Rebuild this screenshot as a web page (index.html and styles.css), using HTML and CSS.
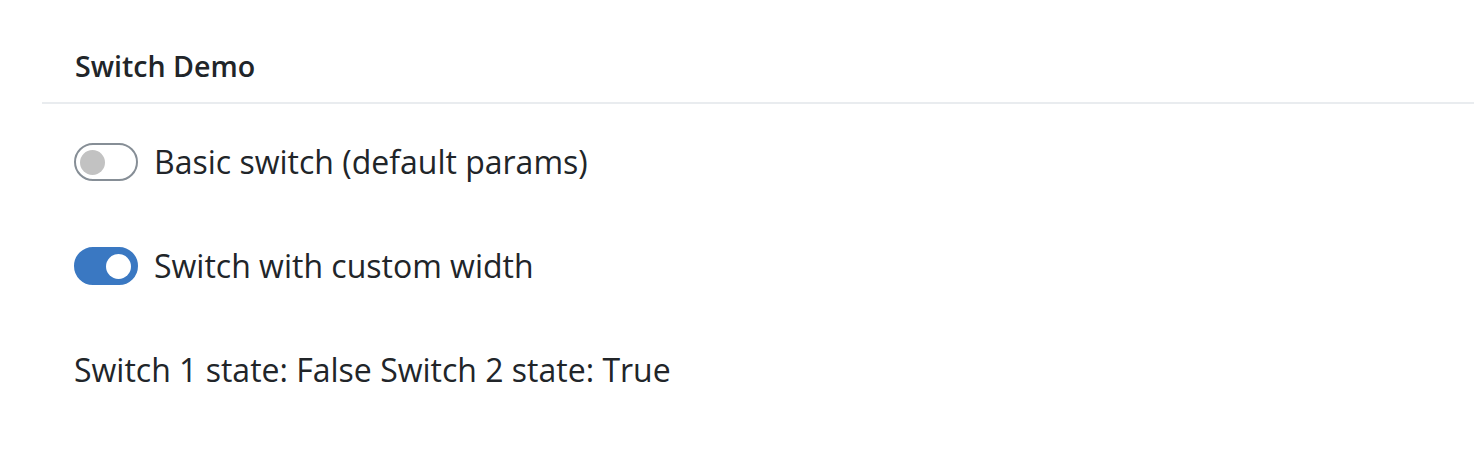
FILE: index.html
```html
<!DOCTYPE html>
<html>
<head>
<meta charset="utf-8">
<link rel="stylesheet" href="styles.css">
</head>
<body>
<div class="panel">
  <div class="panel-header">Switch Demo</div>
  <div class="panel-body">
    <label class="row">
      <span class="switch"><span class="knob"></span></span>
      <span class="label">Basic switch (default params)</span>
    </label>
    <label class="row">
      <span class="switch on"><span class="knob"></span></span>
      <span class="label">Switch with custom width</span>
    </label>
    <div class="state">Switch 1 state: False Switch 2 state: True</div>
  </div>
</div>
</body>
</html>
```
FILE: styles.css
```css
html, body {
  margin: 0;
  padding: 0;
  background: #ffffff;
}
body {
  font-family: "Open Sans", "Noto Sans", sans-serif;
  color: #212529;
}
.panel {
  margin-left: 42px;
}
.panel-header {
  font-weight: 600;
  font-size: 28.6px;
  line-height: 36px;
  padding: 48px 0 18px 33px;
  border-bottom: 2px solid #e9ecef;
}
.panel-body {
  padding: 39px 0 0 32px;
  display: flex;
  flex-direction: column;
  gap: 66px;
}
.row {
  display: flex;
  align-items: center;
  gap: 16px;
  height: 38px;
}
.switch {
  box-sizing: border-box;
  flex: none;
  width: 64px;
  height: 38px;
  border: 2px solid #868e96;
  border-radius: 19px;
  background: #fff;
  display: flex;
  align-items: center;
  padding-left: 4px;
}
.knob {
  width: 25px;
  height: 25px;
  border-radius: 50%;
  background: #c2c2c2;
}
.switch.on {
  background: #3a78c2;
  border-color: #3a78c2;
  justify-content: flex-end;
  padding-left: 0;
  padding-right: 5px;
}
.switch.on .knob {
  background: #fff;
}
.label, .state {
  font-size: 32px;
  line-height: 38px;
}
```
